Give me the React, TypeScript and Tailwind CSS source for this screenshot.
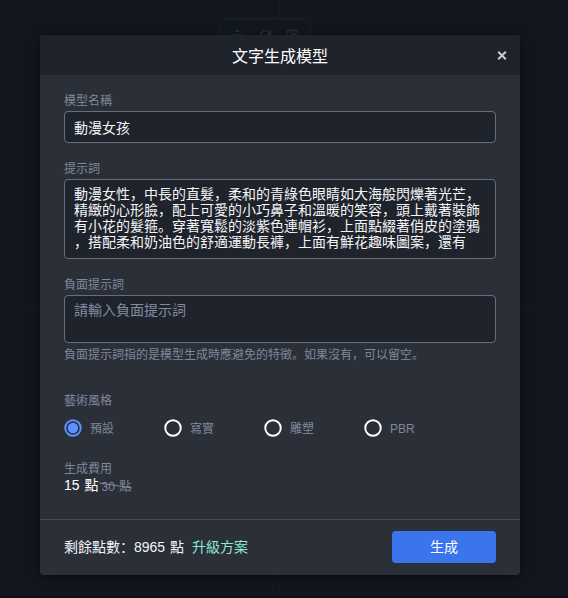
import React, { useState } from 'react';

const PROMPT_LINES = [
  '動漫女性，中長的直髮，柔和的青綠色眼睛如大海般閃爍著光芒，',
  '精緻的心形臉，配上可愛的小巧鼻子和溫暖的笑容，頭上戴著裝飾',
  '有小花的髮箍。穿著寬鬆的淡紫色連帽衫，上面點綴著俏皮的塗鴉',
  '，搭配柔和奶油色的舒適運動長褲，上面有鮮花趣味圖案，還有',
];

const STYLES = ['預設', '寫實', '雕塑', 'PBR'];

const Label: React.FC<{ children: React.ReactNode }> = ({ children }) => (
  <div className="h-[22px] text-xs leading-6 text-[#7f889b]">{children}</div>
);

const RadioIcon: React.FC<{ checked: boolean }> = ({ checked }) => (
  <svg width="18" height="18" viewBox="0 0 18 18" fill="none">
    <circle cx="9" cy="9" r="7.75" stroke={checked ? '#5b92ff' : '#ffffff'} strokeWidth="1.9" />
    {checked && <circle cx="9" cy="9" r="5.2" fill="#5b92ff" />}
  </svg>
);

// Dimmed editor canvas behind the dialog
const Backdrop: React.FC = () => (
  <div className="absolute inset-0 overflow-hidden">
    <div className="absolute left-[279px] top-0 h-full w-px bg-[#161b23]" />
    <div className="absolute left-0 top-[305px] h-px w-full bg-[#161b23]" />
    <div className="absolute left-[219px] top-[18px] flex h-8 w-[92px] justify-between rounded-sm border border-[#191f27] bg-[#13181f] px-[11px] pt-2.5">
      <svg width="13" height="13" viewBox="0 0 13 13" fill="#0c3d3a">
        <path d="M6.5 0L9 3H4zM0 6.5L3 4v5zM13 6.5L10 4v5z" />
        <circle cx="6.5" cy="6.5" r="2" />
      </svg>
      <svg width="13" height="13" viewBox="0 0 13 13" fill="none" stroke="#2b3038" strokeWidth="1.3">
        <path d="M1.5 6A5 5 0 0 1 10.5 4M11.8 1V5H8M11.5 7A5 5 0 0 1 2.5 9.5" />
      </svg>
      <svg width="13" height="13" viewBox="0 0 13 13" fill="none" stroke="#2b3038" strokeWidth="1.3">
        <rect x="1" y="1.5" width="11" height="11" rx="1.5" />
        <path d="M5 4.5H9V8.5M9 4.5L5 8.5" />
      </svg>
    </div>
    <div className="absolute bottom-0 left-0 h-0.5 w-full bg-[#0f1218]" />
  </div>
);

const App: React.FC = () => {
  const [style, setStyle] = useState('預設');

  return (
    <div
      lang="zh-Hans"
      className="relative h-[598px] w-[568px] overflow-hidden bg-[#12171f] pl-10 pt-[35px] font-['Liberation_Sans','Noto_Sans_CJK_SC',sans-serif]"
    >
      <Backdrop />

      <div className="relative flex h-[540px] w-[480px] flex-col rounded bg-[#2b2f38] shadow-[0_2px_14px_rgba(0,0,0,0.5)]">
        <div className="relative flex h-10 items-center justify-center rounded-t bg-[#1f232b] pt-[3px]">
          <h1 className="text-base text-white">文字生成模型</h1>
          <button className="absolute right-[13px] top-4">
            <svg width="10" height="9" viewBox="0 0 10 9" stroke="#c8cbd0" strokeWidth="2">
              <path d="M1.2 0.7L8.8 8.3M8.8 0.7L1.2 8.3" />
            </svg>
          </button>
        </div>

        <div className="flex-1 px-6 pt-3.5">
          <Label>模型名稱</Label>
          <div className="flex h-8 items-center rounded border border-[#666d7d] bg-[#1f232b] px-[9px] pt-0.5 text-sm text-[#f4f5f7]">
            動漫女孩
          </div>

          <div className="mt-3.5">
            <Label>提示詞</Label>
            <div className="h-20 rounded border border-[#666d7d] bg-[#1f232b] px-[9px] pt-1.5 text-sm leading-4 text-[#f4f5f7]">
              {PROMPT_LINES.map((line) => (
                <div key={line} className="whitespace-nowrap">{line}</div>
              ))}
            </div>
          </div>

          <div className="mt-3.5">
            <Label>負面提示詞</Label>
            <div className="h-12 rounded border border-[#666d7d] bg-[#1f232b] px-[9px] pt-1.5 text-sm leading-4 text-[#838ca0]">
              請輸入負面提示詞
            </div>
            <Label>負面提示詞指的是模型生成時應避免的特徵。如果沒有，可以留空。</Label>
          </div>

          <div className="mt-6">
            <Label>藝術風格</Label>
            <div className="mt-2 grid grid-cols-[repeat(4,100px)]">
              {STYLES.map((item) => (
                <button key={item} onClick={() => setStyle(item)} className="flex h-[18px] items-center gap-2">
                  <RadioIcon checked={style === item} />
                  <span className="pt-px text-xs text-[#7f889b]">{item}</span>
                </button>
              ))}
            </div>
          </div>

          <div className="mt-5">
            <Label>生成費用</Label>
            <div className="-mt-[3px] flex h-[18px] items-center gap-[3px] whitespace-nowrap leading-[18px] [word-spacing:1px]">
              <span className="text-sm text-white">15 點</span>
              <span className="relative pt-1 text-xs text-[#7f889b]">
                30 點
                <span className="absolute -left-0.5 -right-px top-[10px] h-px rotate-[9deg] bg-[#7f889b]" />
              </span>
            </div>
          </div>
        </div>

        <div className="flex h-14 items-start justify-between border-t border-[#464b57] px-6 pt-[11px]">
          <div className="flex h-8 items-center gap-2 text-sm text-[#f4f5f7] [word-spacing:1px]">
            <span>剩餘點數：8965 點</span>
            <span className="text-[#8ce8d4]">升級方案</span>
          </div>
          <button className="h-8 w-[104px] rounded bg-[#3a75ee] text-sm text-white">生成</button>
        </div>
      </div>
    </div>
  );
};

export default App;
